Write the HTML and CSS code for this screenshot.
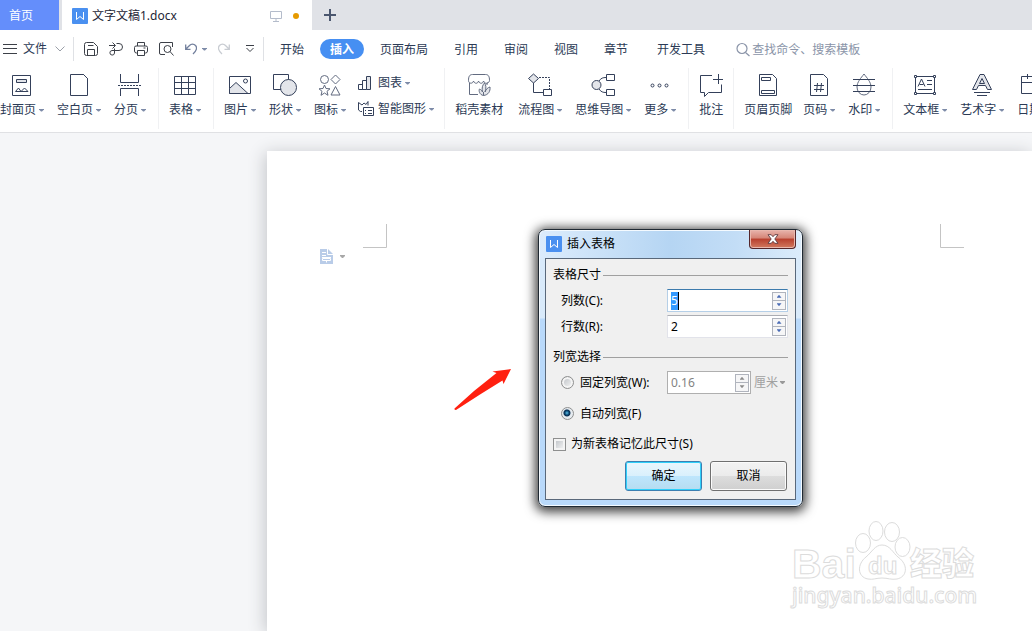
FILE: index.html
```html
<!DOCTYPE html>
<html lang="zh-CN">
<head>
<meta charset="utf-8">
<title>文字文稿1.docx</title>
<link rel="stylesheet" href="styles.css">
</head>
<body>
<div class="app">
  <header class="tabbar">
    <button class="tab-home">首页</button>
    <div class="tab-doc">
      <svg class="wlogo" width="16" height="16" viewBox="0 0 16 16"><rect width="16" height="16" rx="1" fill="#4a90f0"/><path d="M4.500 4v7.500L8 8.500l3.500 3V4" fill="none" stroke="#fff"/></svg>
      <span class="doc-name">文字文稿1.docx</span>
      <svg width="12" height="12" viewBox="0 0 12 12" fill="none" stroke="#b4bccb"><path d="M.5 1.500h11v7H.5zM6 8.500v3M3 11.500h6"/></svg>
      <span class="dot"></span>
    </div>
    <button class="tab-new" aria-label="新建"><svg width="12" height="12" viewBox="0 0 12 12" stroke="#4a566e" stroke-width="2"><path d="M6 0v12M0 6h12"/></svg></button>
  </header>

  <nav class="menubar">
    <button class="file"><svg width="14" height="10" viewBox="0 0 14 10" stroke="#3c4048"><path d="M0 .5h14M0 4.500h14M0 9.500h14"/></svg>文件<svg width="10" height="6" viewBox="0 0 10 6" fill="none" stroke="#9a9fa8"><path d="M.5.5 5 5 9.500.5"/></svg></button>
    <div class="quick">
      <button aria-label="保存"><svg width="14" height="14" viewBox="0 0 14 14" fill="none" stroke="#3c4048"><path d="M.5 2.500a2 2 0 0 1 2-2h7l4 4v7a2 2 0 0 1-2 2h-9a2 2 0 0 1-2-2zM3.500 13.500v-6h7v6M4 3.500h5.500"/></svg></button>
      <button aria-label="输出"><svg width="14" height="14" viewBox="0 0 14 14" fill="none" stroke="#3c4048"><path d="M0 3.500h6M3.500.5l3 3-3 3M7.500 1.500H10a3.500 3.500 0 0 1 0 7H3a2.300 2.300 0 1 0 2.500 2.500V6.500"/></svg></button>
      <button aria-label="打印"><svg width="14" height="14" viewBox="0 0 14 14" fill="none" stroke="#3c4048"><path d="M3.500 4V.5h7V4M3.500 11h-1a2 2 0 0 1-2-2V5.500a1.500 1.500 0 0 1 1.500-1.500h10a1.500 1.500 0 0 1 1.500 1.500V9a2 2 0 0 1-2 2h-1M3.500 8.500h7v5h-7zM9.500 6h2"/></svg></button>
      <button aria-label="打印预览"><svg width="15" height="14" viewBox="0 0 15 14" fill="none" stroke="#3c4048"><path d="M6 12.500H2a1.500 1.500 0 0 1-1.500-1.500V2A1.500 1.500 0 0 1 2 .5h11.500V5"/><circle cx="8.500" cy="7" r="3.500"/><path d="M11 9.500l3.500 4"/></svg></button>
      <button class="undo" aria-label="撤销"><svg width="12" height="12" viewBox="0 0 12 12" fill="none" stroke="#727f9c" stroke-width="1.300"><path d="M.7 1.500v4.800h4.800M1 6l3.500-3.500a4 4 0 0 1 6 0c2 2 1 5.500-2.500 8.500"/></svg><i class="caret"></i></button>
      <button class="redo" aria-label="恢复"><svg width="12" height="12" viewBox="0 0 12 12" fill="none" stroke="#c8ccd2" stroke-width="1.300"><path d="M11.300 1.500v4.800H6.500M11 6 7.500 2.500a4 4 0 0 0-6 0c-2 2-1 5.500 2.500 8.500"/></svg></button>
      <button class="more" aria-label="更多命令"><svg width="8" height="8" viewBox="0 0 8 8" fill="none" stroke="#3c4048"><path d="M0 .5h8M.5 3 4 6.500 7.500 3"/></svg></button>
    </div>
    <div class="menus">
      <button>开始</button><button class="active">插入</button><button>页面布局</button><button>引用</button><button>审阅</button><button>视图</button><button>章节</button><button class="dev">开发工具</button>
    </div>
    <label class="search"><svg width="15" height="15" viewBox="0 0 15 15" fill="none" stroke="#8a94a8" stroke-width="1.200"><circle cx="6" cy="6.500" r="5"/><path d="M9.500 10.500 13.500 14"/></svg><input type="text" placeholder="查找命令、搜索模板" aria-label="查找命令"></label>
  </nav>

  <div class="ribbon">
    <div class="group first">
      <button class="tool"><svg width="24" height="24" viewBox="0 0 24 24"><path d="M2.500 2.500h18v20h-18z"/><path class="soft" d="M6.500 6.500h10v3h-10z"/><path d="M5.500 18.500 8.500 15l2.500 3.500zM11 18.500l3.500-3.500 3.500 3.500z"/></svg><span>封面页<i class="caret"></i></span></button>
      <button class="tool"><svg width="24" height="24" viewBox="0 0 24 24"><path d="M3.500 1.500h13l4 4v17h-17z"/><path d="M16.500 1.500l4 4z"/></svg><span>空白页<i class="caret"></i></span></button>
      <button class="tool"><svg width="24" height="24" viewBox="0 0 24 24"><path d="M2.500 1v8.500h18V1M2.500 23v-7.500h18V23"/><path d="M0 12.500h24" stroke-dasharray="2 1"/></svg><span>分页<i class="caret"></i></span></button>
    </div>
    <div class="group">
      <button class="tool"><svg width="24" height="24" viewBox="0 0 24 24"><path d="M1.500 3.500h21v18h-21zM1.500 9.500h21M1.500 15.500h21M8.500 3.500v18M15.500 3.500v18"/></svg><span>表格<i class="caret"></i></span></button>
    </div>
    <div class="group media">
      <button class="tool"><svg width="24" height="24" viewBox="0 0 24 24"><path d="M1.500 3.500h21v17h-21z"/><path class="soft" d="M1.500 15.500l6.500-6L20 20.500H1.500z"/><circle cx="17.500" cy="8" r="2"/></svg><span>图片<i class="caret"></i></span></button>
      <button class="tool"><svg width="24" height="24" viewBox="0 0 24 24"><path d="M.5 1.500h15v15H.5z"/><circle class="soft" cx="15.500" cy="14.500" r="8"/></svg><span>形状<i class="caret"></i></span></button>
      <button class="tool"><svg class="fine" width="24" height="24" viewBox="0 0 24 24"><circle cx="6.500" cy="6.500" r="4"/><path d="M17.500 2l4.500 4.500-4.500 4.500L13 6.500zM17.500 13.500l4.500 8.500h-9zM6.500 12l1.500 3.500 4 .3-3 2.500 1 4-3.500-2.300-3.500 2.300 1-4-3-2.500 4-.3z"/></svg><span>图标<i class="caret"></i></span></button>
      <div class="stack">
        <button><svg width="16" height="16" viewBox="0 0 16 16"><path d="M.5 9.500h4v5h-4zM4.500 5.500h4v9h-4z"/><path class="soft" d="M8.500 1.500h4v13h-4z"/></svg>图表<i class="caret"></i></button>
        <button><svg width="16" height="16" viewBox="0 0 16 16"><path d="M4 10.500H2.500L.5 9V1.500L4 4l2-2 2 1.500 2-3v4M5.500 6.500h10v8h-10zM7 9.500h1M10 9.500h4M7 12.500h1M10 12.500h4"/></svg>智能图形<i class="caret"></i></button>
      </div>
    </div>
    <div class="group">
      <button class="tool stock"><svg class="fine" width="24" height="24" viewBox="0 0 24 24"><path d="M2.500 10v11.500H11M1.500 7.500c0-4 1-6 4-6h13c3 0 4 2 4 6 0 1-1 2.500-2.500 2.500v2M1.500 7.500c0 3.500 4.500 3.500 5 .5 1 3 4.500 3 5 0 1 3 4.500 3 5 0 1 2.500 3 2.500 4 2"/><path class="soft" d="M16.500 22.500c-4-.5-5-5-4-6.500 1.500.5 2.500 2 3 3-1-4 0-7 2-9 1.500 2 2 5 .5 9 1-3 3-4.500 5-5 .5 4-1.500 8-6.500 8.500zM16.500 22.500V19"/></svg><span>稻壳素材</span></button>
      <button class="tool"><svg width="24" height="24" viewBox="0 0 24 24"><path d="M5.500 9v10.500H15M15.500 16.500h8v6h-8z"/><path class="soft" d="M5.500 1l5 4.500-5 4.500-5-4.500z"/><path d="M11 4.500h10.500v12" stroke-dasharray="2 1"/></svg><span>流程图<i class="caret"></i></span></button>
      <button class="tool"><svg width="24" height="24" viewBox="0 0 24 24"><path d="M15.500 1.500h8v6h-8zM15.500 16.500h8v6h-8zM8 8c2-3 4-3.500 7-3.500M8 16c2 3 4 3.500 7 3.500"/><circle class="soft" cx="5.500" cy="12" r="4.500"/></svg><span>思维导图<i class="caret"></i></span></button>
      <button class="tool"><svg width="24" height="24" viewBox="0 0 24 24"><circle cx="4.500" cy="12.500" r="1.500"/><circle cx="11.500" cy="12.500" r="1.500"/><circle cx="18.500" cy="12.500" r="1.500"/></svg><span>更多<i class="caret"></i></span></button>
    </div>
    <div class="group tight">
      <button class="tool"><svg width="24" height="24" viewBox="0 0 24 24"><path d="M13 2.500H1.500v17h4v4l4-4h13v-8M19.500 1v10M14 6.500h10"/></svg><span>批注</span></button>
    </div>
    <div class="group">
      <button class="tool header-tool"><svg width="24" height="24" viewBox="0 0 24 24"><path d="M3.500 1.500h13l4 4v17h-17zM5.500 4.500h9v3h-9zM5.500 17.500h13v3h-13z"/></svg><span>页眉页脚</span></button>
      <button class="tool"><svg width="24" height="24" viewBox="0 0 24 24"><path d="M3.500 1.500h13l4 4v17h-17zM7 12.500h10M7 16.500h10M10.500 10l-1 9M14.500 10l-1 9"/></svg><span>页码<i class="caret"></i></span></button>
      <button class="tool"><svg width="24" height="24" viewBox="0 0 24 24"><path class="thin" d="M12 1c3 4 7 8 7 13a7 8 0 0 1-14 0c0-5 4-9 7-13z"/><path d="M1 6.500h22M1 12.500h22M1 18.500h22"/></svg><span>水印<i class="caret"></i></span></button>
    </div>
    <div class="group last">
      <button class="tool"><svg width="24" height="24" viewBox="0 0 24 24"><path d="M2.500 3.500h19v17h-19zM5 13.500 8.500 6l3.500 7.500M6.500 11.500h4M14 7.500h5M14 11.500h5M5 16.500h14"/><path class="knob" d="M1.500 2.500h2v2h-2zM20.500 2.500h2v2h-2zM1.500 19.500h2v2h-2zM20.500 19.500h2v2h-2z"/></svg><span>文本框<i class="caret"></i></span></button>
      <button class="tool"><svg width="24" height="24" viewBox="0 0 24 24"><path class="soft" d="M10 1.500h4l7.500 15h-4l-2-4h-7l-2 4h-4zM12 5.500l2.500 5h-5z"/><path d="M4 19.500h16M7 22.500h10"/></svg><span>艺术字<i class="caret"></i></span></button>
      <button class="tool date"><svg width="24" height="24" viewBox="0 0 24 24"><path d="M.5 3.500h22v17H.5zM.5 9.500h22M6.500 1v5M17.500 1v5"/><circle class="white" cx="17" cy="17" r="5.500"/></svg><span>日期<i class="caret"></i></span></button>
    </div>
  </div>

  <main class="workspace">
    <div class="page">
      <svg class="crop crop-left" width="24" height="24" viewBox="0 0 24 24"><path d="M23.500 0v23.500H0"/></svg>
      <svg class="crop crop-right" width="24" height="24" viewBox="0 0 24 24"><path d="M.5 0v23.500H24"/></svg>
      <button class="para" aria-label="段落布局"><svg width="13" height="15" viewBox="0 0 13 15"><path d="M0 0h8l5 5v10H0z" fill="#b9cce8"/><path d="M7.500 0v5.500H13M2 3.500h4M2 6.500h4M2 8.500h9M2.500 9.500h8v2h-8zM6.500 11.500v2" fill="none" stroke="#fff"/></svg><i class="caret"></i></button>
      <svg class="arrow" width="58" height="44" viewBox="0 0 58 44"><path d="M.5 40.500 20 23 42.500 5 38.500 3.500 57 1 49.500 16 48.500 12.500 26 26.500 2 42Q0 42 .5 40.500z" fill="#ff2010"/></svg>
      <svg class="watermark" width="200" height="100" viewBox="0 0 200 100">
        <g class="wm-shape"><ellipse cx="71" cy="22" rx="7.500" ry="9.500"/><ellipse cx="84" cy="10" rx="7" ry="9.500"/><ellipse cx="100" cy="11" rx="7.500" ry="9.500"/><ellipse cx="110.500" cy="26" rx="7.500" ry="9.500"/><path d="M90 24c8 0 11 8 16 12 11 8 9 20-1 22-6 1-9-1-15-1s-9 2-14 1c-11-2-11-15-2-22 6-5 9-12 16-12z"/></g>
        <text class="wm-latin" x="0" y="57">Bai</text>
        <text class="wm-du" x="76" y="53">du</text>
        <text class="wm-cjk" x="118" y="54">经验</text>
        <text class="wm-url" x="0" y="82">jingyan.baidu.com</text>
      </svg>
    </div>
  </main>

  <form class="dialog" role="dialog" aria-labelledby="dlg-title" onsubmit="return false">
    <div class="titlebar">
      <svg class="wlogo" width="16" height="16" viewBox="0 0 16 16"><rect width="16" height="16" rx="1" fill="#4a90f0"/><path d="M4.500 4v7.500L8 8.500l3.500 3V4" fill="none" stroke="#fff"/></svg>
      <span id="dlg-title">插入表格</span>
      <button type="button" class="close" aria-label="关闭"><svg width="12" height="10" viewBox="0 0 12 10"><path d="M1 .7h3.200L6 2.700 7.800.7H11L7.800 5 11 9.300H7.800L6 7.300 4.200 9.300H1L4.200 5z" fill="#fff" stroke="#5c3a40" stroke-width=".9"/></svg></button>
    </div>
    <div class="client">
      <h2>表格尺寸</h2>
      <div class="row"><label for="cols">列数(C):</label><div class="spin focus"><input id="cols" type="text" value="5"><span class="arrows"><button type="button" aria-label="增加列"></button><button type="button" aria-label="减少列"></button></span></div></div>
      <div class="row"><label for="rows">行数(R):</label><div class="spin"><input id="rows" type="text" value="2"><span class="arrows"><button type="button" aria-label="增加行"></button><button type="button" aria-label="减少行"></button></span></div></div>
      <h2 class="second">列宽选择</h2>
      <div class="row fixed"><label><input type="radio" name="width">固定列宽(W):</label><div class="spin off"><input type="text" value="0.16" disabled aria-label="列宽"><span class="arrows"><button type="button" disabled aria-label="增加列宽"></button><button type="button" disabled aria-label="减少列宽"></button></span></div><span class="unit"><select disabled aria-label="单位"><option>厘米</option></select><i class="caret"></i></span></div>
      <div class="row auto"><label><input type="radio" name="width" checked>自动列宽(F)</label></div>
      <label class="remember"><input type="checkbox">为新表格记忆此尺寸(S)</label>
      <div class="actions"><button class="ok">确定</button><button type="button">取消</button></div>
    </div>
  </form>
</div>
</body>
</html>
```
FILE: styles.css
```css
* { box-sizing: border-box; }
body, button, input, select {
  font: 12px/16px "Noto Sans", "Noto Sans CJK SC", sans-serif;
}
body { margin: 0; color: #2b3a55; }
button { border: 0; padding: 0; background: none; color: inherit; white-space: nowrap; }
svg { flex: none; display: block; }

.app { position: relative; display: flex; flex-direction: column; height: 100vh; overflow: hidden; background: #fff; }

.caret { display: inline-block; flex: none; width: 5px; height: 3px; background: #7d8ba8; clip-path: polygon(0 0, 100% 0, 100% 34%, 60% 100%, 40% 100%, 0 34%); }

/* Tabs */
.tabbar { display: flex; flex: none; height: 30px; background: #e0e2e7; }
.tab-home { width: 59px; padding: 2px 17px 0 0; background: #648efb; color: #fff; }
.tab-doc { display: flex; align-items: center; width: 250px; margin-left: 3px; padding: 2px 13px 0 10px; background: #fff; color: #1d2535; }
.doc-name { flex: 1; margin-left: 4px; }
.dot { width: 6px; height: 6px; margin-left: 11px; border-radius: 50%; background: #e69a00; }
.tab-new { padding: 0 12px; }

/* Menu row */
.menubar { display: flex; flex: none; align-items: center; height: 38px; }
.file { display: flex; align-items: center; gap: 6px; width: 74px; height: 24px; padding-left: 3px; border-right: 1px solid #dfe1e5; }
.file svg:last-child { margin-left: 2px; }
.quick { display: flex; align-items: center; gap: 11px; width: 190px; height: 24px; padding-left: 10px; border-right: 1px solid #dfe1e5; }
.quick .undo { display: flex; align-items: center; gap: 5px; }
.quick .more { margin-left: 5px; }
.menus { display: flex; gap: 6px; padding-left: 6px; }
.menus button { height: 20px; padding: 2px 10px 0; border-radius: 10px; }
.menus .active { background: #468ff2; color: #fff; font-weight: bold; }
.menus .dev { margin-left: 3px; }
.search { display: flex; align-items: center; flex: 1; gap: 1px; margin-left: 21px; }
.search input { flex: 1; min-width: 0; padding: 1px 0 0; border: 0; outline: 0; background: none; }
.search input::placeholder { color: #8a94a8; opacity: 1; }

/* Ribbon */
.ribbon { display: flex; flex: none; height: 65px; border-bottom: 1px solid #e0e1e4; overflow: hidden; }
.group { display: flex; flex: none; gap: 13px; height: 61px; padding: 5px 12px 0 10px; border-right: 1px solid #f0f1f3; }
.group.first { padding-left: 0; }
.group.media { padding-right: 10px; }
.group.tight { padding-right: 10px; }
.group.last { border: 0; }
.tool { display: flex; flex: none; flex-direction: column; align-items: center; gap: 5px; height: 45px; }
.tool span, .stack button { display: flex; align-items: center; gap: 3px; }
.ribbon svg { fill: none; stroke: #34405a; }
.ribbon .fine, .ribbon .thin { stroke: #626b80; }
.ribbon .soft { fill: #e3e5ea; }
.ribbon .white, .ribbon .knob { fill: #fff; }
.stock { margin-right: 2px; }
.header-tool { margin-right: -2px; }
.stack { display: flex; flex-direction: column; gap: 10px; padding-top: 2px; margin-left: -1px; }
.stack svg { margin-right: 1px; }

/* Document */
.workspace { flex: 1; min-height: 0; padding: 18px 0 0 267px; background: #f5f6f8; }
.page { position: relative; height: 100%; background: #fff; box-shadow: -2px 2px 16px #c4c6ca; }
.crop { position: absolute; top: 73px; fill: none; stroke: #c4c4c4; }
.crop-left { left: 96px; }
.crop-right { left: 673px; }
.para { position: absolute; top: 98px; left: 53px; display: flex; align-items: center; gap: 7px; }
.para .caret { background: #a8a8a8; }
.arrow { position: absolute; top: 217px; left: 187px; }
.watermark { position: absolute; top: 370px; left: 525px; overflow: visible; fill: #fff; stroke: #dcdcdc; }
.wm-latin, .wm-du { font-family: "Liberation Sans", sans-serif; font-weight: bold; }
.wm-latin { font-size: 41px; }
.wm-du { font-size: 24px; }
.wm-cjk { font: 900 32px "Noto Sans CJK SC", sans-serif; }
.wm-url { font: 500 21px "Noto Sans", sans-serif; }

/* Dialog */
.dialog {
  position: absolute; top: 229px; left: 538px; width: 265px; padding: 0 6px 6px;
  border: 1px solid #1f2933; border-radius: 7px; color: #000;
  background: linear-gradient(90deg, #dcecfc, #b5d5f3 50%, #c3ddf6 75%, #dcecfb) top / 100% 28px no-repeat, linear-gradient(#d9eafa 0 88px, #b9d9fa 89px);
  box-shadow: inset 0 0 0 1px #f4faff, 0 2px 11px 3px rgba(0, 0, 0, .75);
}
.titlebar { display: flex; align-items: flex-start; height: 28px; padding-left: 1px; }
.titlebar .wlogo { margin-top: 6px; }
.titlebar span { flex: 1; margin: 6px 0 0 5px; }
.close {
  display: grid; place-items: center; width: 47px; height: 19px; border: 1px solid #54262a; border-top: 0; border-radius: 0 0 4px 4px;
  background: linear-gradient(#e8b5ad, #d58577 45%, #b8402e 50%, #d27a60); box-shadow: inset 0 0 0 1px #e9b8ae;
}
.client { padding: 8px 7px 7px; border: 1px solid #59687a; background: #f0f0f0; }
.client h2 { display: flex; align-items: center; gap: 2px; margin: 0 0 6px; font: inherit; }
.client h2::after { content: ""; flex: 1; height: 1px; background: #a0a0a0; }
.client h2.second { margin: 11px 0 6px; }
.row { display: flex; align-items: center; height: 23px; margin-bottom: 3px; padding-left: 8px; }
.row label { width: 106px; flex: none; }
.row label, .remember { display: flex; align-items: center; }
.spin { display: flex; flex: 1; min-width: 0; align-items: center; height: 23px; padding: 0 1px 0 3px; border: 1px solid #e2e3ea; border-top-color: #abadb3; background: #fff; }
.spin input { flex: 1; min-width: 0; height: 18px; padding: 0; border: 0; outline: 0; background: none; color: #000; }
.spin.focus { border-color: #b5cfe7; border-top-color: #3d7bad; }
.focus input { color: #fff; background: linear-gradient(90deg, #3399ff 0 7px, #000 7px 8px, transparent 8px); }
.arrows { display: flex; flex: none; flex-direction: column; width: 14px; height: 18px; border: 1px solid #b0b4bd; }
.arrows button { display: grid; flex: 1; place-items: center; background: #f6f6f7; }
.arrows button + button { border-top: 1px solid #b0b4bd; }
.arrows button::before { content: ""; width: 5px; height: 3px; background: #4a6bb5; clip-path: polygon(50% 0, 100% 100%, 0 100%); }
.arrows button + button::before { clip-path: polygon(0 0, 100% 0, 50% 100%); }
.spin.off { flex: none; width: 84px; border-color: #afafaf; background: #fff; }
.off input { color: #838383; }
.off .arrows button::before { background: #8b8b8b; }
.unit { display: flex; align-items: center; gap: 2px; margin-left: 3px; }
.unit select { width: 24px; padding: 0; border: 0; appearance: none; background: none; color: #a0a0a0; opacity: 1; }
.unit .caret { background: #999; }
input[type="radio"], input[type="checkbox"] { flex: none; appearance: none; width: 13px; height: 13px; margin: 0 6px 0 0; border: 1px solid #8e8f8f; background: linear-gradient(135deg, #b9bdc2, #fafafa); box-shadow: inset 0 0 0 2px #f4f4f4; }
input[type="radio"] { border-radius: 50%; }
input[type="radio"]:checked { background: radial-gradient(circle at 45% 45%, #5fc4ea 0, #0b4a78 2px, #0a2f50 3px, #e6ebf0 4px); box-shadow: none; }
.row.auto { margin: 8px 0 0; }
.remember { height: 16px; margin-top: 11px; }
.remember input[type="checkbox"] { margin-right: 5px; }
.actions { display: flex; justify-content: flex-end; gap: 8px; margin: 9px 1px 1px 0; }
.actions button { width: 77px; height: 30px; border: 1px solid #707070; border-radius: 3px; background: linear-gradient(#f3f3f3, #ebebeb 50%, #dddddd 50%, #cfcfcf); box-shadow: inset 0 0 0 1px #fbfbfb; }
.actions .ok { border-color: #3c7fb1; background: linear-gradient(#eaf6fd, #d9f0fc 50%, #bee6fd 50%, #b5dcf0); box-shadow: inset 0 0 0 1px #2fd0fa; }
```
